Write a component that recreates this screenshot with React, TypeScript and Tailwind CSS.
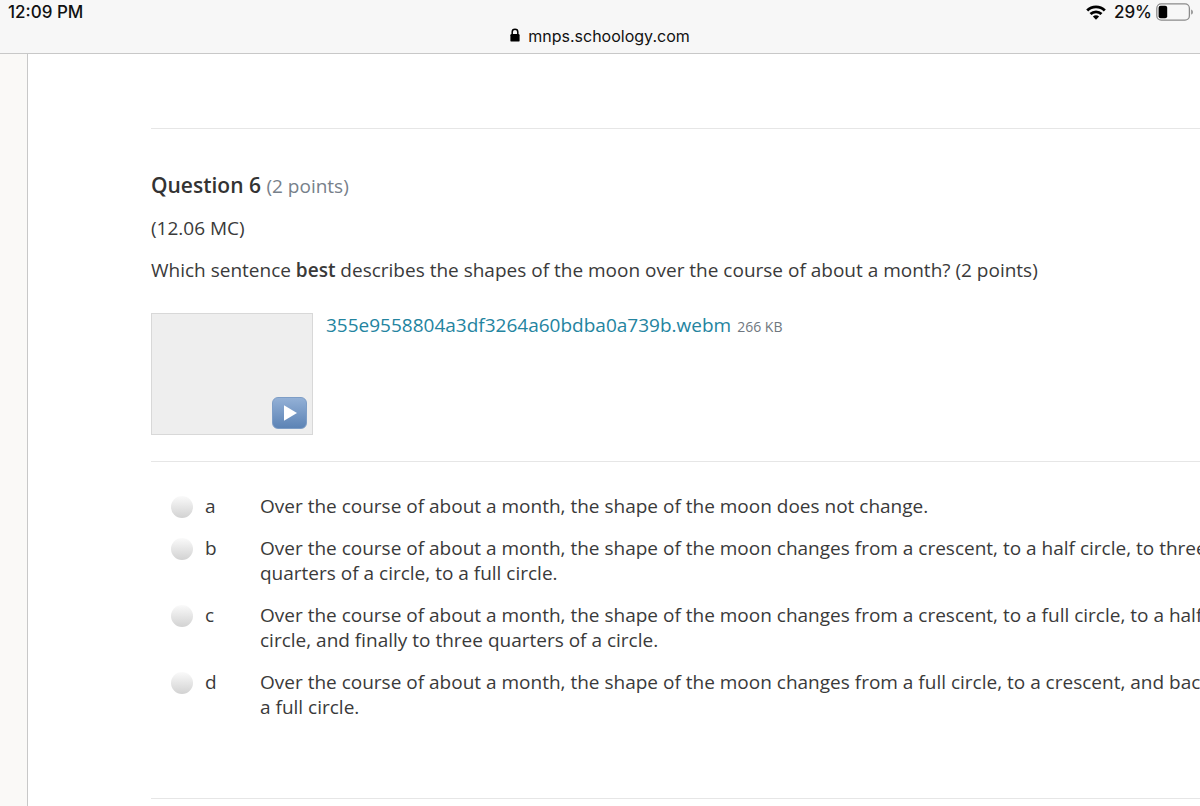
import React from 'react';

interface Choice {
  id: string;
  text: string;
}

const choices: Choice[] = [
  {
    id: 'a',
    text: 'Over the course of about a month, the shape of the moon does not change.',
  },
  {
    id: 'b',
    text: 'Over the course of about a month, the shape of the moon changes from a crescent, to a half circle, to three quarters of a circle, to a full circle.',
  },
  {
    id: 'c',
    text: 'Over the course of about a month, the shape of the moon changes from a crescent, to a full circle, to a half circle, and finally to three quarters of a circle.',
  },
  {
    id: 'd',
    text: 'Over the course of about a month, the shape of the moon changes from a full circle, to a crescent, and back to a full circle.',
  },
];

const WifiIcon = () => (
  <svg width="20" height="15" viewBox="0 0 20 15" fill="none" stroke="#000" strokeWidth="2.8">
    <path d="M1.2 5.6C6 0.7 14 0.7 18.8 5.6" />
    <path d="M4.5 9.1C7.6 6 12.4 6 15.5 9.1" />
    <path d="M10 14.8L6.9 11.6C8.6 9.9 11.4 9.9 13.1 11.6Z" fill="#000" stroke="none" />
  </svg>
);

const BatteryIcon = () => (
  <svg width="38" height="18" viewBox="0 0 38 18" fill="none">
    <rect x="0.8" y="0.8" width="32.6" height="16.4" rx="4.4" stroke="#8b8b8b" strokeWidth="1.3" />
    <rect x="2.6" y="2.8" width="8.6" height="12.4" rx="2" fill="#000" />
    <path d="M35.2 6.4C37.4 7.2 37.4 10.8 35.2 11.6Z" fill="#8b8b8b" />
  </svg>
);

const LockIcon = () => (
  <svg width="10" height="14" viewBox="0 0 10 14" fill="none">
    <rect x="0.4" y="6" width="9.2" height="7.6" rx="1.2" fill="#000" />
    <path d="M2.2 6.5V4C2.2 0.4 7.8 0.4 7.8 4V6.5" stroke="#000" strokeWidth="1.5" />
  </svg>
);

const StatusBar = () => (
  <header className="border-b border-[#c8c8c8] bg-[#f7f7f7] font-['Inter',sans-serif] text-[#111]">
    <div className="flex h-6 items-center justify-between pl-2 pr-1.5 text-[17px] font-medium leading-6">
      <span>12:09 PM</span>
      <div className="flex items-center gap-1">
        <WifiIcon />
        <span className="ml-1">29%</span>
        <BatteryIcon />
      </div>
    </div>
    <div className="flex h-[29px] items-start justify-center gap-2 text-[16px] leading-6">
      <span className="mt-1">
        <LockIcon />
      </span>
      <span>mnps.schoology.com</span>
    </div>
  </header>
);

const VideoAttachment = () => (
  <div className="flex items-start gap-[13px]">
    <div className="flex h-[122px] w-[162px] shrink-0 items-end justify-end border border-[#d8d8d8] bg-[#eee] p-[5px]">
      <button
        type="button"
        aria-label="Play video"
        className="flex h-8 w-[35px] items-center justify-center rounded-md border border-[#7d9dc6] bg-linear-to-b from-[#93b0d6] to-[#5c83b5]"
      >
        <svg width="16" height="18" viewBox="0 0 16 18">
          <path d="M2 1.2L15 9L2 16.8Z" fill="#fff" />
        </svg>
      </button>
    </div>
    <p className="whitespace-nowrap">
      <a href="#video" className="text-[#24849f]">
        355e9558804a3df3264a60bdba0a739b.webm
      </a>
      <span className="ml-1.5 text-[14px] text-[#6f7780]">266 KB</span>
    </p>
  </div>
);

const ChoiceRow: React.FC<{ choice: Choice }> = ({ choice }) => (
  <label htmlFor={`choice-${choice.id}`} className="flex items-start">
    <input
      id={`choice-${choice.id}`}
      type="radio"
      name="question-6"
      value={choice.id}
      className="mt-0.5 h-[22px] w-[22px] shrink-0 appearance-none rounded-full bg-linear-to-b from-[#fafafa] to-[#d2d2d2] checked:to-[#8a8a8a]"
    />
    <span className="ml-3 w-[55px] shrink-0">{choice.id}</span>
    <span>{choice.text}</span>
  </label>
);

export default function App() {
  return (
    <div className="flex min-h-screen flex-col overflow-hidden bg-[#faf9f7] font-['Open_Sans',sans-serif] text-[19px] leading-[25px] text-[#3a3a3a]">
      <StatusBar />
      <div className="flex grow pl-[27px]">
        {/* the sheet runs past the right edge of the screen */}
        <main className="-mr-10 grow border-l border-[#c8c8c8] bg-white pl-[123px] pt-[74px]">
          <section className="border-y border-[#e6e6e6] pt-11">
            <h2 className="text-[21px] font-semibold text-[#333]">
              Question 6 <span className="text-[19px] font-normal text-[#77808a]">(2 points)</span>
            </h2>
            <p className="mt-[17px]">(12.06 MC)</p>
            <p className="mt-[17px]">
              Which sentence <strong className="font-semibold">best</strong> describes the shapes of the moon over the
              course of about a month? (2 points)
            </p>
            <div className="mt-[30px] border-b border-[#e6e6e6] pb-[26px]">
              <VideoAttachment />
            </div>
            <fieldset aria-label="Question 6 answers" className="flex flex-col gap-[17px] pb-[78px] pl-5 pt-8">
              {choices.map((choice) => (
                <ChoiceRow key={choice.id} choice={choice} />
              ))}
            </fieldset>
          </section>
        </main>
      </div>
    </div>
  );
}
